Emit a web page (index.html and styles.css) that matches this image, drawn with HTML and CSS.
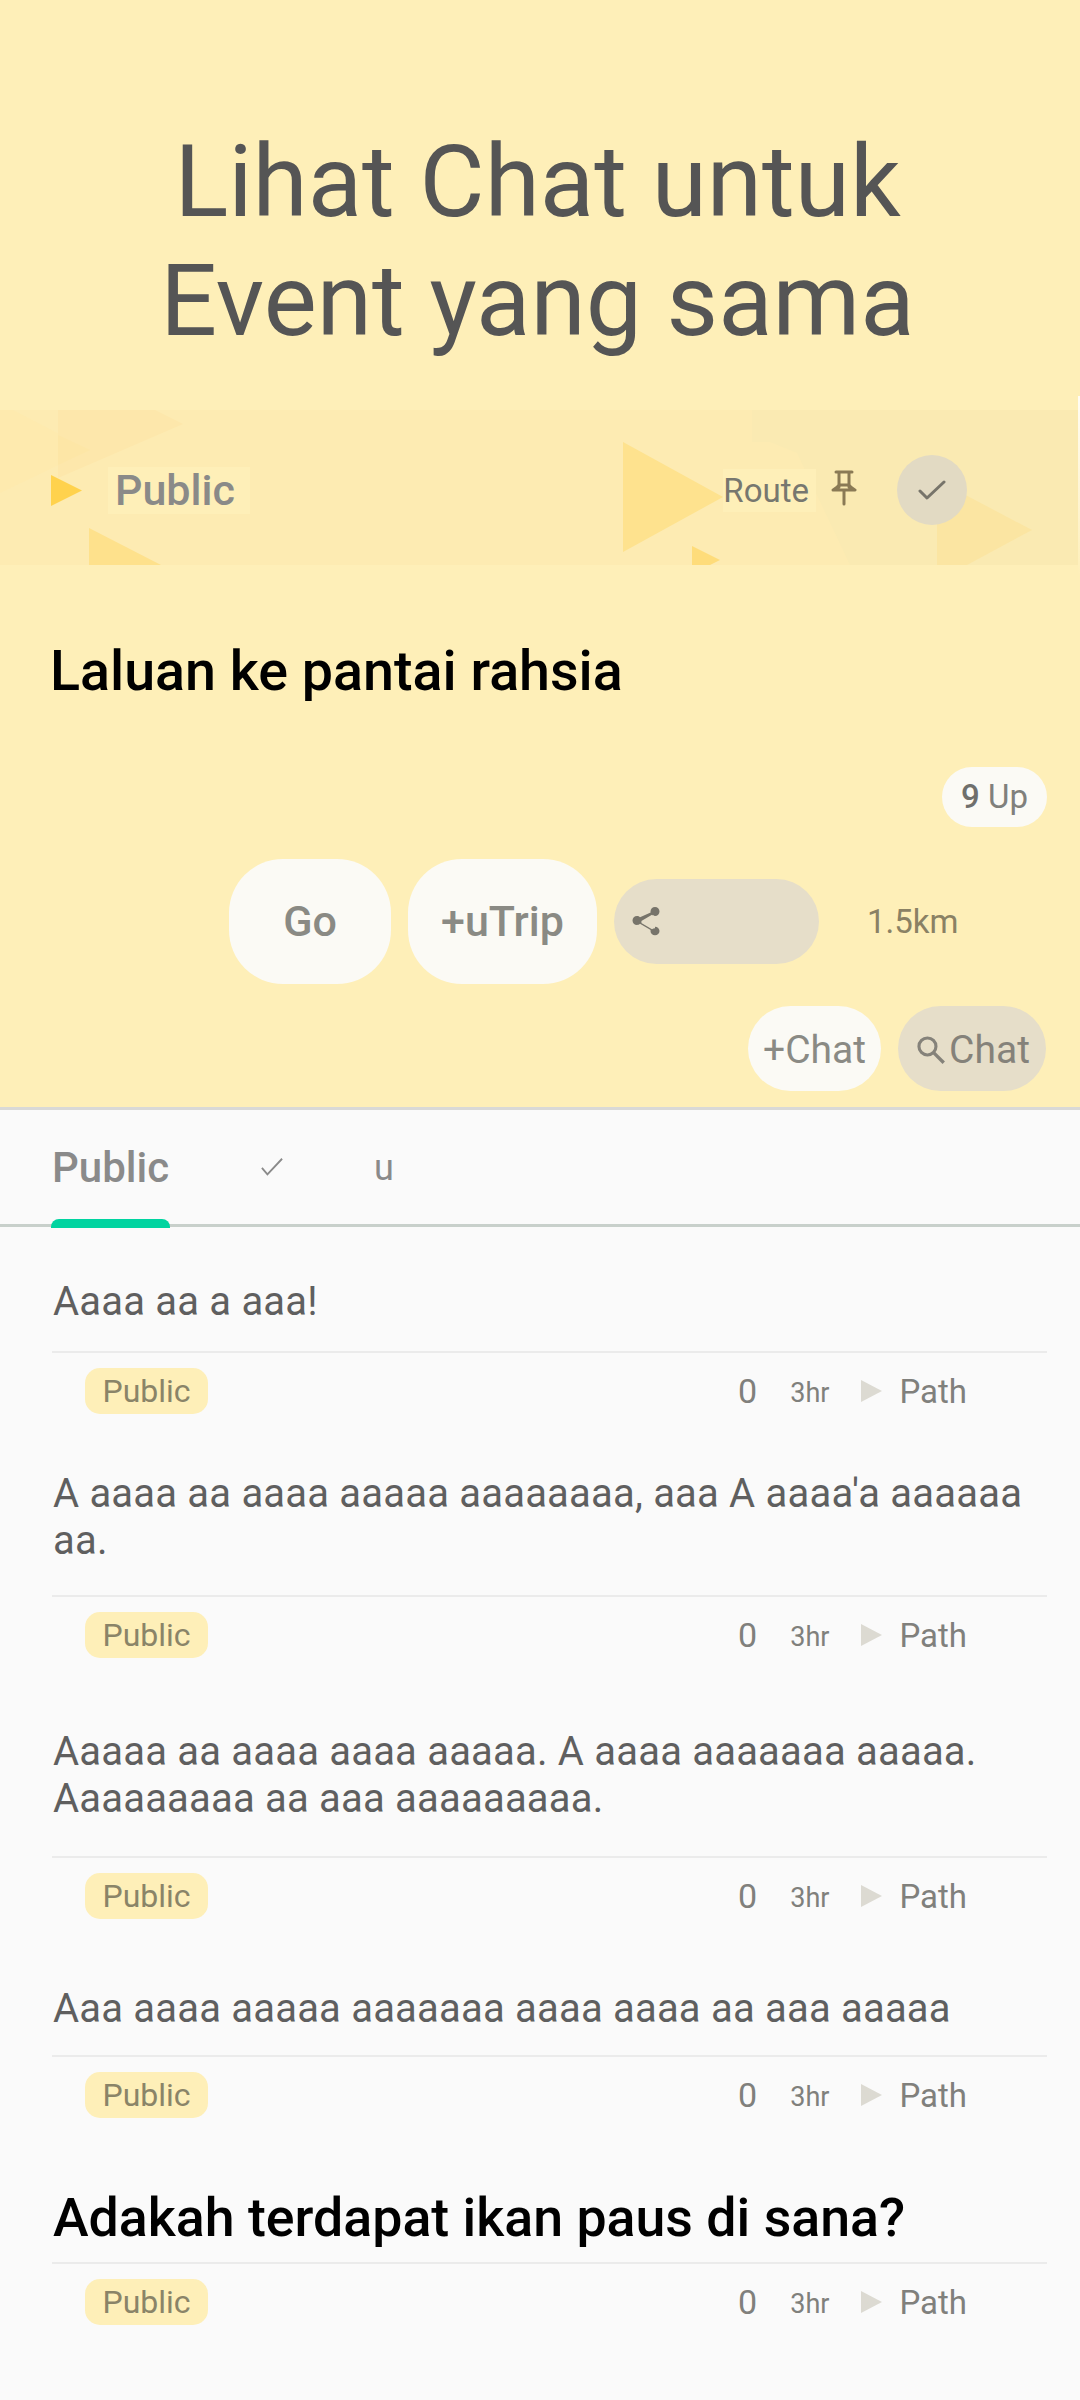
FILE: index.html
```html
<!DOCTYPE html>
<html lang="ms">
<head>
<meta charset="utf-8">
<title>Laluan</title>
<link rel="stylesheet" href="styles.css">
</head>
<body>
<section class="hero">
  <h1 class="headline">Lihat Chat untuk<br>Event yang sama</h1>
  <div class="band">
    <svg class="band-art" viewBox="0 0 1080 155" aria-hidden="true">
      <path d="M752 0V32H770L797 43L850 155H1080V0Z" fill="#faeab2"/>
      <path d="M0 0H13L90 40L0 83Z" fill="#feeaae"/>
      <path d="M58 0H155L183 14L58 68Z" fill="#fde7ab"/>
      <path d="M58 25L90 40L58 55Z" fill="#fde6a6"/>
      <path d="M89 118L161 155H89Z" fill="#fee18c"/>
      <path d="M623 32L723 87L623 142Z" fill="#fee28e"/>
      <path d="M692 136L720 150L710 155H692Z" fill="#fedc7a"/>
      <path d="M937 70L1032 120L967 155H937Z" fill="#fbe5a2"/>
    </svg>
    <div class="band-left">
      <svg class="marker" viewBox="0 0 31 31" aria-hidden="true"><path d="M0 0L31 15.5L0 31Z"/></svg>
      <span class="band-title">Public</span>
    </div>
    <div class="band-right">
      <span class="band-route">Route</span>
      <svg class="pin" viewBox="0 0 26 36" aria-hidden="true"><path d="M5 2h16M8 2v15M18 2v15M2 20c2-1 5-3 6-5h10c1 2 4 4 6 5zM13 20v14" fill="none" stroke="#8a7a55" stroke-width="3" stroke-linecap="round" stroke-linejoin="round"/></svg>
      <span class="check-circle">
        <svg viewBox="0 0 28 24" aria-hidden="true"><path d="M2 13l7 7L26 4" fill="none" stroke="#77746a" stroke-width="3" stroke-linecap="round" stroke-linejoin="round"/></svg>
      </span>
    </div>
  </div>
  <h2 class="route-title">Laluan ke pantai rahsia</h2>
  <div class="up-row"><span class="up-pill"><b>9</b> Up</span></div>
  <div class="action-row">
    <span class="big-pill go">Go</span>
    <span class="big-pill trip">+uTrip</span>
    <span class="share-pill">
      <svg viewBox="0 0 24 24" aria-hidden="true"><path d="M18 16.100c-.8 0-1.400.3-2 .8l-7.100-4.200c.1-.2.100-.5.100-.7s0-.5-.1-.7L16 7.200c.5.5 1.200.8 2 .8 1.700 0 3-1.300 3-3s-1.300-3-3-3-3 1.300-3 3c0 .2 0 .5.100.7L8 8.800C7.500 8.300 6.800 8 6 8c-1.700 0-3 1.300-3 3s1.300 3 3 3c.8 0 1.500-.3 2-.8l7.100 4.200c-.1.200-.1.400-.1.600 0 1.600 1.300 2.900 3 2.900s3-1.300 3-2.900-1.300-2.900-3-2.900z" fill="#77746a"/></svg>
    </span>
    <span class="distance">1.5km</span>
  </div>
  <div class="chat-row">
    <span class="chat-pill plus">+Chat</span>
    <span class="chat-pill search">
      <svg viewBox="0 0 24 24" aria-hidden="true"><circle cx="9.500" cy="9.500" r="6" fill="none" stroke="#85827a" stroke-width="2.200"/><path d="M14 14l7 7" stroke="#85827a" stroke-width="2.400"/></svg>Chat
    </span>
  </div>
</section>
<nav class="tabs">
  <span class="tab active">Public</span>
  <svg class="tab-check" viewBox="0 0 28 24" aria-hidden="true"><path d="M3 13l6 7L25 3" fill="none" stroke="#8a8a8a" stroke-width="2"/></svg>
  <span class="tab plain">u</span>
</nav>
<main class="feed">
  <article class="post">
    <p class="post-text first">Aaaa aa a aaa!</p>
    <div class="meta">
      <span class="tag">Public</span>
      <div class="meta-right"><span class="count">0</span><span class="age">3hr</span><i class="tri"></i><span class="path">Path</span></div>
    </div>
  </article>
  <article class="post">
    <p class="post-text second">A aaaa aa aaaa aaaaa aaaaaaaa, aaa A aaaa'a aaaaaa aa.</p>
    <div class="meta">
      <span class="tag">Public</span>
      <div class="meta-right"><span class="count">0</span><span class="age">3hr</span><i class="tri"></i><span class="path">Path</span></div>
    </div>
  </article>
  <article class="post">
    <p class="post-text third">Aaaaa aa aaaa aaaa aaaaa. A aaaa aaaaaaa aaaaa. Aaaaaaaaa aa aaa aaaaaaaaa.</p>
    <div class="meta">
      <span class="tag">Public</span>
      <div class="meta-right"><span class="count">0</span><span class="age">3hr</span><i class="tri"></i><span class="path">Path</span></div>
    </div>
  </article>
  <article class="post">
    <p class="post-text fourth">Aaa aaaa aaaaa aaaaaaa aaaa aaaa aa aaa aaaaa</p>
    <div class="meta">
      <span class="tag">Public</span>
      <div class="meta-right"><span class="count">0</span><span class="age">3hr</span><i class="tri"></i><span class="path">Path</span></div>
    </div>
  </article>
  <article class="post">
    <p class="post-text question">Adakah terdapat ikan paus di sana?</p>
    <div class="meta">
      <span class="tag">Public</span>
      <div class="meta-right"><span class="count">0</span><span class="age">3hr</span><i class="tri"></i><span class="path">Path</span></div>
    </div>
  </article>
</main>
</body>
</html>
```
FILE: styles.css
```css
* { box-sizing: border-box; }
html, body { margin: 0; padding: 0; }
body {
  width: 1080px;
  height: 2400px;
  overflow: hidden;
  background: #fafafa;
  font-family: Roboto, "Noto Sans", sans-serif;
  color: #5f5f5f;
}
.hero {
  position: relative;
  height: 1107px;
  background: #feefb8;
  padding-top: 122px;
}
.hero::after {
  content: "";
  position: absolute;
  top: 396px;
  right: 0;
  width: 2px;
  height: 180px;
  background: linear-gradient(#fffdf5, #feefb8);
}
.headline {
  margin: 0;
  height: 288px;
  padding-right: 5px;
  font-size: 100px;
  line-height: 119px;
  font-weight: 400;
  text-align: center;
  color: #555555;
}
.band {
  position: relative;
  height: 155px;
  background: #fdebb2;
  display: flex;
  align-items: center;
  justify-content: space-between;
  padding: 5px 113px 0 51px;
}
.band-art {
  position: absolute;
  left: 0;
  top: 0;
  width: 1080px;
  height: 155px;
}
.band-left, .band-right {
  position: relative;
  display: flex;
  align-items: center;
}
.marker { width: 31px; height: 31px; fill: #ffd24d; }
.band-title {
  margin-left: 26px;
  padding: 0 15px 0 7px;
  font-size: 43px;
  line-height: 47px;
  font-weight: 500;
  color: #8a8a88;
  background: #feefb8;
}
.band-route {
  font-size: 33px;
  line-height: 43px;
  color: #77776f;
  background: #feefb8;
  padding-right: 7px;
}
.pin { width: 26px; height: 36px; margin: 0 40px 4px 15px; }
.check-circle {
  width: 70px;
  height: 70px;
  border-radius: 50%;
  background: #e2dac3;
  display: flex;
  align-items: center;
  justify-content: center;
}
.check-circle svg { width: 28px; height: 24px; }
.route-title {
  margin: 74px 0 0;
  padding-left: 50px;
  font-size: 55.6px;
  line-height: 64px;
  font-weight: 500;
  color: #000;
}
.up-row {
  display: flex;
  justify-content: flex-end;
  padding-right: 33px;
  margin-top: 64px;
}
.up-pill {
  height: 60px;
  padding: 0 19px;
  border-radius: 30px;
  background: #fbfaf5;
  font-size: 33px;
  line-height: 60px;
  color: #80807c;
}
.up-pill b { font-weight: 500; color: #6f6f6c; }
.action-row {
  display: flex;
  align-items: center;
  gap: 17px;
  padding-left: 229px;
  margin-top: 32px;
}
.big-pill {
  height: 125px;
  border-radius: 54px;
  background: #fbfaf5;
  font-size: 43px;
  line-height: 125px;
  font-weight: 500;
  text-align: center;
  color: #8a8a84;
}
.go { width: 162px; }
.trip { width: 189px; }
.share-pill {
  width: 205px;
  height: 85px;
  border-radius: 43px;
  background: #e6dec9;
  padding-left: 14px;
  display: flex;
  align-items: center;
}
.share-pill svg { width: 36px; height: 36px; }
.distance {
  margin-left: 31px;
  font-size: 33px;
  color: #8a8164;
}
.chat-row {
  display: flex;
  justify-content: flex-end;
  gap: 17px;
  padding-right: 34px;
  margin-top: 22px;
}
.chat-pill {
  height: 85px;
  padding-top: 2px;
  justify-content: center;
  border-radius: 43px;
  background: #fbfaf5;
  font-size: 39px;
  color: #8a8a84;
  display: flex;
  align-items: center;
}
.chat-pill.plus { width: 133px; }
.chat-pill.search { width: 148px; background: #e6dec9; color: #85827a; }
.chat-pill svg { width: 34px; height: 34px; margin-right: 1px; }
.tabs {
  height: 120px;
  border-top: 3px solid #d9d9d7;
  border-bottom: 3px solid #c8d0cb;
  display: flex;
  align-items: center;
  padding: 0 0 0 52px;
  background: #fafafa;
}
.tab { font-size: 36px; color: #8a8a8a; }
.tab.plain { padding-top: 2px; }
.tab.active {
  position: relative;
  font-size: 42px;
  font-weight: 500;
}
.tab.active::after {
  content: "";
  position: absolute;
  left: -1px;
  right: -1px;
  bottom: -36px;
  height: 9px;
  border-radius: 8px 8px 0 0;
  background: #00d4a0;
}
.tab-check { width: 26px; height: 22px; margin: 0 89px 0 90px; }
.feed { padding: 0 33px 0 53px; }
.post-text {
  margin: 0;
  font-size: 40px;
  line-height: 47px;
  letter-spacing: 0.2px;
  color: #5f5f5f;
}
.first { padding-top: 51px; padding-bottom: 26px; }
.second { padding-top: 39px; padding-bottom: 31px; }
.third { padding-top: 53px; padding-bottom: 34px; }
.fourth { padding-top: 49px; padding-bottom: 23px; }
.question {
  padding-top: 55px;
  padding-bottom: 16px;
  font-size: 53.7px;
  line-height: 56px;
  font-weight: 500;
  letter-spacing: 0;
  color: #000;
}
.meta {
  margin-left: -1px;
  border-top: 2px solid #ebebeb;
  height: 80px;
  display: flex;
  align-items: center;
  justify-content: space-between;
  padding: 0 80px 2px 33px;
}
.tag {
  height: 46px;
  width: 123px;
  text-align: center;
  border-radius: 15px;
  background: #feefb8;
  font-size: 32px;
  line-height: 46px;
  color: #8a8468;
}
.meta-right { display: flex; align-items: center; color: #80807c; }
.count { font-size: 34px; }
.age { font-size: 27px; margin-left: 33px; padding-top: 4px; }
.tri {
  width: 0;
  height: 0;
  margin-left: 32px;
  border-left: 21px solid #dcdad2;
  border-top: 11px solid transparent;
  border-bottom: 11px solid transparent;
}
.path { font-size: 33px; margin-left: 17px; }
```
